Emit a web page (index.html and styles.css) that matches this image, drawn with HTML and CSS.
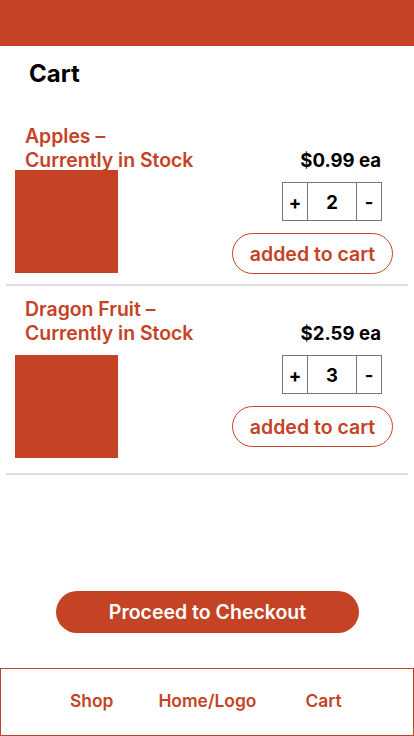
FILE: index.html
```html
<!DOCTYPE html>
<html lang="en">
<head>
<meta charset="utf-8">
<meta name="viewport" content="width=device-width, initial-scale=1">
<title>Cart</title>
<link rel="stylesheet" href="styles.css">
</head>
<body>
  <header class="topbar"></header>
  <main class="main">
    <h1 class="page-title">Cart</h1>
    <section class="cart-list">
      <article class="item item--first">
        <h2 class="item-title">Apples –<br>Currently in Stock</h2>
        <div class="item-price">$0.99 ea</div>
        <div class="thumb"></div>
        <div class="controls">
          <div class="qty">
            <span class="qty-btn">+</span>
            <span class="qty-val">2</span>
            <span class="qty-btn">-</span>
          </div>
          <button class="added">added to cart</button>
        </div>
      </article>
      <article class="item">
        <h2 class="item-title">Dragon Fruit –<br>Currently in Stock</h2>
        <div class="item-price">$2.59 ea</div>
        <div class="thumb"></div>
        <div class="controls">
          <div class="qty">
            <span class="qty-btn">+</span>
            <span class="qty-val">3</span>
            <span class="qty-btn">-</span>
          </div>
          <button class="added">added to cart</button>
        </div>
      </article>
    </section>
  </main>
  <div class="checkout-wrap">
    <button class="checkout">Proceed to Checkout</button>
  </div>
  <nav class="tabbar">
    <a class="tab">Shop</a>
    <a class="tab">Home/Logo</a>
    <a class="tab tab--last">Cart</a>
  </nav>
</body>
</html>
```

FILE: styles.css
```css
* { box-sizing: border-box; }

html, body { margin: 0; padding: 0; }

body {
  font-family: Inter, "Noto Sans", "Liberation Sans", sans-serif;
  background: #fff;
  color: #000;
  min-height: 100vh;
  display: flex;
  flex-direction: column;
}

.topbar {
  height: 46px;
  background: #C44325;
  flex: none;
}

.main { flex: 1; }

.page-title {
  margin: 14px 0 0 0;
  padding-left: 29px;
  font-size: 24px;
  line-height: 28px;
  font-weight: 700;
}

.cart-list {
  margin-top: 25px;
}

.item {
  margin: 0 6px;
  border-bottom: 2px solid #dcdcdc;
  padding: 11px 0 15px 0;
  display: grid;
  grid-template-columns: 1fr auto;
  row-gap: 10px;
}

.item--first { padding-bottom: 10px; }
.item--first .thumb { margin-top: -12px; }

.item-title {
  margin: 0;
  padding-left: 19px;
  font-size: 19.4px;
  line-height: 24px;
  font-weight: 600;
  color: #C44325;
}

.item-price {
  align-self: end;
  justify-self: end;
  margin-right: 27px;
  font-size: 18.6px;
  line-height: 24px;
  font-weight: 700;
}

.thumb {
  margin-left: 9px;
  width: 103px;
  height: 103px;
  background: #C44325;
}

.controls {
  display: flex;
  flex-direction: column;
  align-items: flex-end;
  gap: 12px;
}

.qty {
  margin-right: 26px;
  display: flex;
  height: 39px;
  border: 1px solid #777;
}

.qty-btn, .qty-val {
  display: flex;
  align-items: center;
  justify-content: center;
  font-size: 18.5px;
  font-weight: 700;
}

.qty-btn { width: 24px; }
.qty-val {
  width: 50px;
  border-left: 1px solid #777;
  border-right: 1px solid #777;
}

.added {
  margin-right: 15px;
  width: 161px;
  height: 41px;
  border: 1px solid #C44325;
  border-radius: 21px;
  background: #fff;
  color: #C44325;
  font-family: inherit;
  font-size: 19.5px;
  font-weight: 600;
  padding: 0;
}

.checkout-wrap {
  padding-left: 56px;
  margin-bottom: 35px;
}

.checkout {
  width: 303px;
  height: 42px;
  border: none;
  border-radius: 21px;
  background: #C44325;
  color: #fff;
  font-family: inherit;
  font-size: 19.5px;
  font-weight: 600;
  padding: 0;
}

.tabbar {
  height: 68px;
  border: 1px solid #C44325;
  display: flex;
  justify-content: flex-start;
  align-items: center;
  gap: 45px;
  padding: 0 0 3px 69px;
  flex: none;
}

.tab--last { margin-left: 4px; }

.tab {
  color: #C44325;
  font-size: 17.4px;
  font-weight: 600;
  text-decoration: none;
}
```
